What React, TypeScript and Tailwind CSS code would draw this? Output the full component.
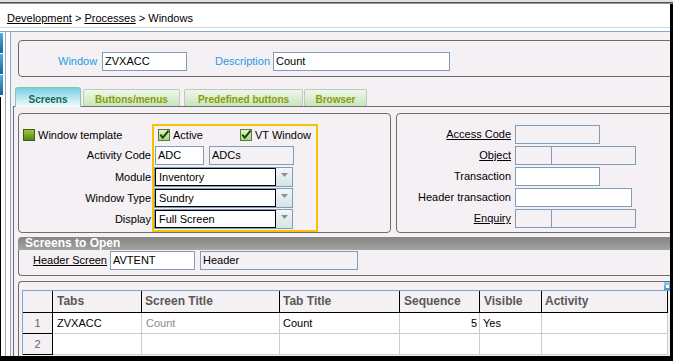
import React from "react";

function Field({ w, value, gray, className = "" }: { w: string; value?: string; gray?: boolean; className?: string }) {
  return (
    <div
      className={`${w} h-[19px] shrink-0 border border-[#7f9db9] ${gray ? "bg-[#f4f0f4]" : "bg-white"} flex items-center pl-[2px] whitespace-nowrap ${className}`}
    >
      {value}
    </div>
  );
}

function Tick() {
  return (
    <svg width="12" height="12" viewBox="0 0 12 12" className="shrink-0">
      <defs>
        <linearGradient id="tk" x1="0" y1="0" x2="0" y2="1">
          <stop offset="0" stopColor="#e4f5c4" />
          <stop offset="1" stopColor="#a9d86a" />
        </linearGradient>
      </defs>
      <rect x="0.5" y="0.5" width="11" height="11" fill="url(#tk)" stroke="#5b7a45" />
      <path d="M2.3 5.6 L4.8 8.6 L10.6 1.6" stroke="#16431e" strokeWidth="2" fill="none" />
    </svg>
  );
}

function GreenBox() {
  return (
    <svg width="12" height="12" viewBox="0 0 12 12" className="shrink-0">
      <defs>
        <linearGradient id="gb" x1="0" y1="0" x2="0" y2="1">
          <stop offset="0" stopColor="#a6cc44" />
          <stop offset="1" stopColor="#557f10" />
        </linearGradient>
      </defs>
      <rect x="0.5" y="0.5" width="11" height="11" fill="url(#gb)" stroke="#3f5e14" />
    </svg>
  );
}

function Drop({ value }: { value: string }) {
  return (
    <div className="w-[139px] h-[20px] border border-[#7f9db9] flex shrink-0">
      <div className="flex-1 bg-white border border-black flex items-center pl-[3px]">{value}</div>
      <div className="w-[16px] bg-gradient-to-b from-[#f2f7f8] to-[#d6e4e6] flex justify-center pt-[5px]">
        <svg width="7" height="4" viewBox="0 0 7 4">
          <path d="M0 0 H7 L3.5 4 Z" fill="#8a8f94" />
        </svg>
      </div>
    </div>
  );
}

const COLS = ["w-[89px]", "w-[138px]", "w-[120px]", "w-[80px]", "w-[62px]", "w-[126px]"];

function GridRow({ n, cells }: { n: string; cells: { t: string; cls?: string }[] }) {
  return (
    <div className="flex h-[21px]">
      <div className="w-[30px] shrink-0 border-r border-b border-black bg-[#f4f0f4] flex items-center justify-center text-[#666]">{n}</div>
      {COLS.map((c, i) => (
        <div key={i} className={`${c} shrink-0 border-r border-b border-[#cccccc] bg-white flex items-center ${cells[i]?.cls ?? "pl-[3px]"}`}>
          {cells[i]?.t}
        </div>
      ))}
    </div>
  );
}

export default function App() {
  const heads = [
    { t: "Tabs", cls: "pl-[4px]" },
    { t: "Screen Title", cls: "pl-[3px]" },
    { t: "Tab Title", cls: "pl-[3px]" },
    { t: "Sequence", cls: "pl-[4px]" },
    { t: "Visible", cls: "pl-[4px]" },
    { t: "Activity", cls: "pl-[3px]" },
  ];

  return (
    <div className="w-[673px] h-[361px] overflow-hidden flex flex-col bg-black font-['Liberation_Sans',Arial,sans-serif] text-[11px] leading-[13px] text-black">
      <div className="h-[2px] bg-[#e2e2e2]" />
      <div className="h-[1px] bg-[#4e4e4e]" />
      <div className="h-[1px] bg-[#9a9a9a]" />

      <div className="flex flex-1 min-h-0">
        <div className="w-[670px] flex flex-col">
          {/* breadcrumb */}
          <div className="h-[23px] bg-white pl-[7px] pt-[8px] whitespace-nowrap">
            <span className="underline">Development</span> &gt; <span className="underline">Processes</span> &gt; Windows
          </div>
          <div className="h-[1px] bg-[#d4d4d4]" />
          <div className="h-[3px] bg-white" />
          <div className="h-[1px] bg-[#86a6c6]" />

          <div className="flex flex-1 min-h-0">
            {/* left strip */}
            <div className="w-[11px] flex shrink-0 bg-white">
              <div className="w-[3px] flex flex-col">
                <div className="h-[1px]" />
                <div className="h-[20px] mb-[1px] bg-gradient-to-b from-[#4fb0e2] to-[#14669c]" />
                <div className="h-[20px] mb-[1px] bg-gradient-to-b from-[#4fb0e2] to-[#14669c]" />
                <div className="h-[20px] mb-[2px] bg-gradient-to-b from-[#4fb0e2] to-[#14669c]" />
                <div className="flex-1 border-l border-black" />
              </div>
              <div className="w-[2px]" />
              <div className="w-[1px] bg-[#a8a8a8]" />
              <div className="w-[4px]" />
              <div className="w-[1px] bg-[#86a9c9]" />
            </div>

            <div className="flex-1 bg-[#f4f0f4] overflow-hidden flex flex-col">
              {/* window header */}
              <div className="mt-[8px] ml-[7px] w-[700px] h-[37px] shrink-0 border border-[#6a6a6a] rounded-[4px]">
                <div className="mt-[11px] pl-[39px] flex items-center h-[19px]">
                  <span className="w-[44px] text-[#1c9ce4]">Window</span>
                  <Field w="w-[85px]" value="ZVXACC" />
                  <span className="ml-[28px] w-[58px] text-[#1c9ce4]">Description</span>
                  <Field w="w-[177px]" value="Count" />
                </div>
              </div>

              {/* tabs */}
              <div className="ml-[2px] mt-[10px] flex flex-col flex-1 min-h-0">
                <div className="h-[19px] flex items-end pl-[2px] shrink-0 font-bold text-[10px] leading-[12px]">
                  <div className="relative z-10 -mb-[1px] w-[66px] h-[20px] border border-b-0 border-[#86c6a6] rounded-t-[3px] bg-gradient-to-b from-[#72cfe2] to-[#f6fcf9] text-center pt-[6px] text-[#0b6a5a]">
                    Screens
                  </div>
                  <div className="ml-[2px] w-[97px] h-[17px] border border-b-0 border-[#c4c4c4] rounded-t-[2px] bg-gradient-to-b from-[#eef8ea] to-[#c6e6bb] text-center pt-[4px] text-[#8a9b08]">
                    Buttons/menus
                  </div>
                  <div className="ml-[4px] w-[119px] h-[17px] border border-b-0 border-[#c4c4c4] rounded-t-[2px] bg-gradient-to-b from-[#eef8ea] to-[#c6e6bb] text-center pt-[4px] text-[#8a9b08]">
                    Predefined buttons
                  </div>
                  <div className="ml-[1px] w-[63px] h-[17px] border border-b-0 border-[#c4c4c4] rounded-t-[2px] bg-gradient-to-b from-[#eef8ea] to-[#c6e6bb] text-center pt-[4px] text-[#8a9b08]">
                    Browser
                  </div>
                </div>

                <div className="flex-1 border-t border-l border-[#6e6e6e] pl-[4px] pt-[6px] flex flex-col">
                  <div className="flex gap-[5px] shrink-0">
                    {/* left group */}
                    <div className="w-[373px] h-[120px] shrink-0 border border-[#6e6e6e] rounded-[4px] flex">
                      <div className="w-[133px] shrink-0 pt-[12px] flex flex-col">
                        <div className="h-[18px] flex items-center pl-[4px]">
                          <GreenBox />
                          <span className="ml-[3px]">Window template</span>
                        </div>
                        <div className="mt-[2px] h-[19px] flex items-center justify-end pr-[1px]">Activity Code</div>
                        <div className="mt-[2px] h-[20px] flex items-center justify-end pr-[1px]">Module</div>
                        <div className="mt-[1px] h-[20px] flex items-center justify-end pr-[1px]">Window Type</div>
                        <div className="mt-[1px] h-[20px] flex items-center justify-end pr-[1px]">Display</div>
                      </div>
                      <div className="mt-[10px] w-[166px] h-[108px] shrink-0 border-2 border-[#f7c200] flex flex-col">
                        <div className="h-[18px] flex items-center pl-[4px]">
                          <div className="w-[82px] flex items-center">
                            <Tick />
                            <span className="ml-[3px]">Active</span>
                          </div>
                          <Tick />
                          <span className="ml-[3px]">VT Window</span>
                        </div>
                        <div className="mt-[2px] flex">
                          <Field w="w-[49px]" value="ADC" className="ml-[1px]" />
                          <Field w="w-[85px]" value="ADCs" gray className="ml-[5px]" />
                        </div>
                        <div className="mt-[2px] flex flex-col gap-[1px]">
                          <Drop value="Inventory" />
                          <Drop value="Sundry" />
                          <Drop value="Full Screen" />
                        </div>
                      </div>
                    </div>

                    {/* right group */}
                    <div className="w-[300px] h-[120px] shrink-0 border border-[#6e6e6e] rounded-[4px] pt-[11px] flex flex-col gap-[2px]">
                      <div className="h-[19px] flex items-center">
                        <span className="w-[114px] shrink-0 text-right underline">Access Code</span>
                        <Field w="w-[85px]" gray className="ml-[4px]" />
                      </div>
                      <div className="h-[19px] flex items-center">
                        <span className="w-[114px] shrink-0 text-right underline">Object</span>
                        <Field w="w-[37px]" gray className="ml-[4px]" />
                        <Field w="w-[85px]" gray className="-ml-[1px]" />
                      </div>
                      <div className="h-[19px] flex items-center">
                        <span className="w-[114px] shrink-0 text-right">Transaction</span>
                        <Field w="w-[85px]" className="ml-[4px]" />
                      </div>
                      <div className="h-[19px] flex items-center">
                        <span className="w-[114px] shrink-0 text-right">Header transaction</span>
                        <Field w="w-[117px]" className="ml-[4px]" />
                      </div>
                      <div className="h-[19px] flex items-center">
                        <span className="w-[114px] shrink-0 text-right underline">Enquiry</span>
                        <Field w="w-[37px]" gray className="ml-[4px]" />
                        <Field w="w-[85px]" gray className="-ml-[1px]" />
                      </div>
                    </div>
                  </div>

                  {/* screens to open */}
                  <div className="mt-[4px] w-[700px] h-[13px] shrink-0 rounded-tl-[4px] bg-gradient-to-b from-[#858585] to-[#a3a39f] pl-[7px] text-white font-bold text-[12px] leading-[13px]">
                    Screens to Open
                  </div>
                  <div className="w-[700px] h-[26px] shrink-0 border-l border-b border-[#6e6e6e] rounded-bl-[4px] pl-[14px]">
                    <div className="mt-[1px] flex items-center h-[19px]">
                      <span className="w-[77px] shrink-0 underline">Header Screen</span>
                      <Field w="w-[85px]" value="AVTENT" />
                      <Field w="w-[158px]" value="Header" gray className="ml-[5px]" />
                    </div>
                  </div>

                  {/* grid */}
                  <div className="relative mt-[5px] w-[700px] flex-1 border-t border-l border-[#6e6e6e] rounded-tl-[4px] pt-[8px] pl-[3px]">
                    <div className="absolute left-[645px] top-[0px] w-[7px] h-[8px] bg-gradient-to-b from-[#8fd0f0] to-[#3a9ad4] flex items-center justify-center">
                      <div className="w-[3px] h-[3px] bg-white" />
                    </div>
                    <div className="w-[648px] border-t border-l border-[#7ea6c8]">
                      <div className="flex h-[22px] border-b border-black w-[645px] bg-[#f4f0f4] font-bold text-[12px] text-[#585858]">
                        <div className="w-[30px] shrink-0 border-r border-black" />
                        {COLS.map((c, i) => (
                          <div key={i} className={`${c} shrink-0 border-r border-black flex items-center ${heads[i].cls}`}>
                            {heads[i].t}
                          </div>
                        ))}
                      </div>
                      <GridRow
                        n="1"
                        cells={[
                          { t: "ZVXACC", cls: "pl-[4px]" },
                          { t: "Count", cls: "pl-[4px] text-[#8a8a8a]" },
                          { t: "Count", cls: "pl-[3px]" },
                          { t: "5", cls: "justify-end pr-[2px]" },
                          { t: "Yes", cls: "pl-[3px]" },
                          { t: "", cls: "" },
                        ]}
                      />
                      <GridRow n="2" cells={[]} />
                    </div>
                  </div>
                </div>
              </div>
            </div>
          </div>
        </div>
        <div className="w-[3px] bg-black" />
      </div>
      <div className="h-[5px] bg-black" />
    </div>
  );
}
